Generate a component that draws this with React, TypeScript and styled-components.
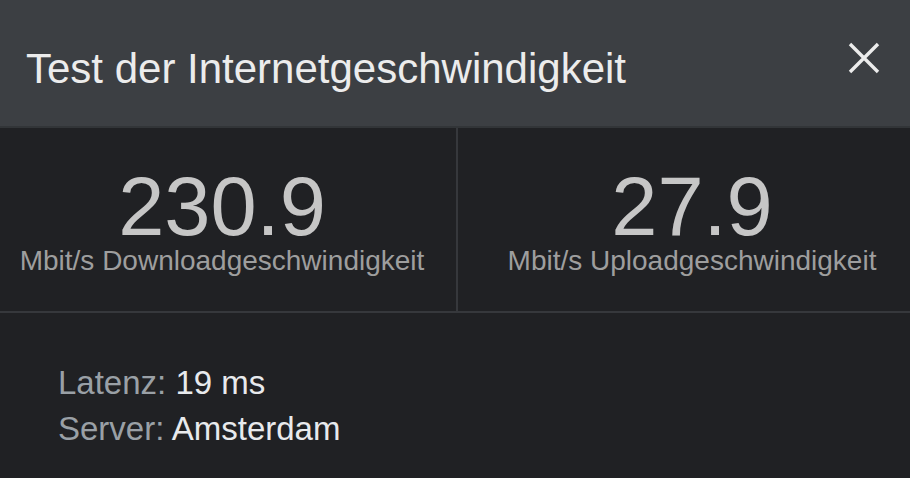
import React from "react";
import styled, { createGlobalStyle } from "styled-components";

const GlobalStyle = createGlobalStyle`
  html, body {
    margin: 0;
    padding: 0;
    background: #202124;
  }
  body {
    font-family: "Liberation Sans", Arial, sans-serif;
  }
`;

const Panel = styled.div`
  width: 910px;
  height: 478px;
  background: #202124;
  display: flex;
  flex-direction: column;
  overflow: hidden;
`;

const Header = styled.div`
  box-sizing: border-box;
  height: 128px;
  padding: 45px 30px 0 26px;
  background: #3c3f43;
  border-bottom: 2px solid #323538;
  display: flex;
  justify-content: space-between;
  align-items: flex-start;
`;

const Title = styled.div`
  font-size: 42px;
  line-height: 48px;
  color: #ececec;
`;

const CloseButton = styled.button`
  margin-top: -3px;
  width: 32px;
  height: 32px;
  padding: 0;
  border: none;
  background: transparent;
  color: #ececec;
  cursor: pointer;
`;

const Stats = styled.div`
  display: grid;
  grid-template-columns: 456px 2px 1fr;
  height: 183px;
  border-bottom: 2px solid #36383c;
`;

const Divider = styled.div`
  background: #36383c;
`;

const StatCell = styled.div<{ $shift: number }>`
  box-sizing: border-box;
  padding-top: 38px;
  padding-left: ${(p) => (p.$shift > 0 ? p.$shift * 2 : 0)}px;
  padding-right: ${(p) => (p.$shift < 0 ? -p.$shift * 2 : 0)}px;
  display: flex;
  flex-direction: column;
  align-items: center;
  text-align: center;
`;

const Value = styled.div`
  font-size: 83px;
  line-height: 81px;
  color: #c6c6c6;
`;

const Unit = styled.div`
  font-size: 28px;
  line-height: 28px;
  color: #9e9e9e;
  white-space: nowrap;
`;

const Info = styled.div`
  padding: 47px 0 0 58px;
  font-size: 33px;
  line-height: 46px;
`;

const InfoRow = styled.div`
  color: #e8eaed;
`;

const InfoLabel = styled.span`
  color: #9aa0a6;
`;

function CloseIcon() {
  return (
    <svg width="32" height="32" viewBox="0 0 32 32">
      <path
        d="M2 2 L30 30 M30 2 L2 30"
        stroke="currentColor"
        strokeWidth="3.4"
        fill="none"
      />
    </svg>
  );
}

const stats = [
  { value: "230.9", unit: "Mbit/s Downloadgeschwindigkeit", shift: -6 },
  { value: "27.9", unit: "Mbit/s Uploadgeschwindigkeit", shift: 8 },
];

export default function App() {
  return (
    <>
      <GlobalStyle />
      <Panel>
        <Header>
          <Title>Test der Internetgeschwindigkeit</Title>
          <CloseButton aria-label="Schließen">
            <CloseIcon />
          </CloseButton>
        </Header>
        <Stats>
          <StatCell $shift={stats[0].shift}>
            <Value>{stats[0].value}</Value>
            <Unit>{stats[0].unit}</Unit>
          </StatCell>
          <Divider />
          <StatCell $shift={stats[1].shift}>
            <Value>{stats[1].value}</Value>
            <Unit>{stats[1].unit}</Unit>
          </StatCell>
        </Stats>
        <Info>
          <InfoRow>
            <InfoLabel>Latenz:</InfoLabel> 19 ms
          </InfoRow>
          <InfoRow>
            <InfoLabel>Server:</InfoLabel> Amsterdam
          </InfoRow>
        </Info>
      </Panel>
    </>
  );
}
